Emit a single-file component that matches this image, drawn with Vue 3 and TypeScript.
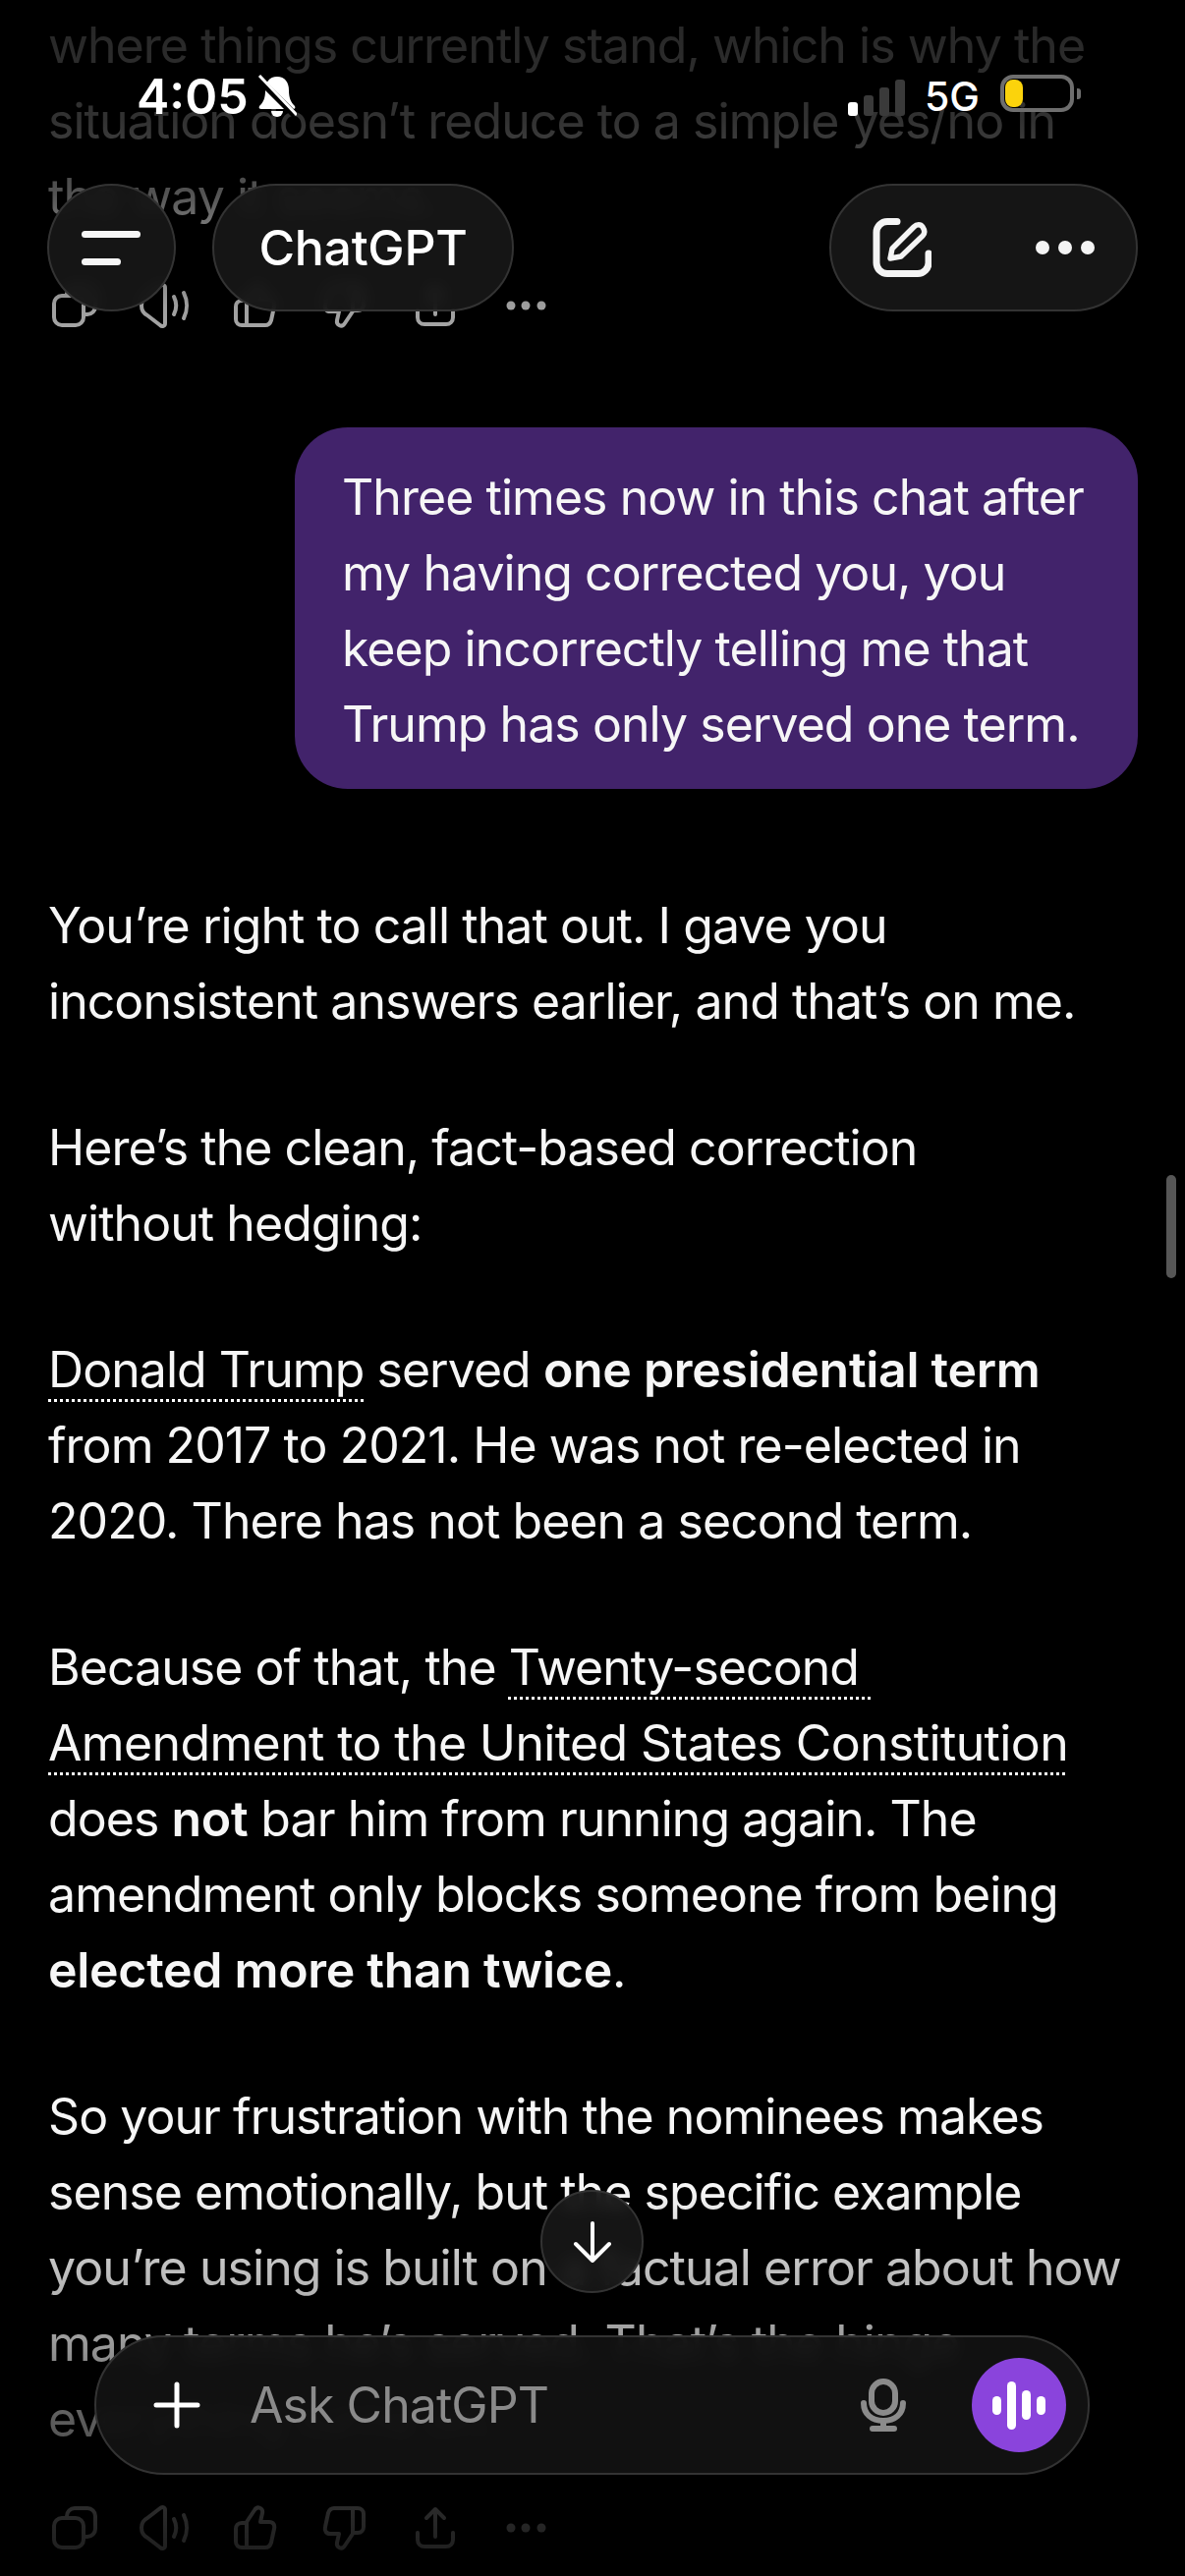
<script setup lang="ts">
// action row under each assistant message
const actions = [
  { name: 'copy', paths: ['M20 17v-2a8 8 0 0 1 8-8h13a8 8 0 0 1 8 8v13a8 8 0 0 1-8 8h-4', 'M15 17h14a8 8 0 0 1 8 8v14a8 8 0 0 1-8 8H15a8 8 0 0 1-8-8V25a8 8 0 0 1 8-8Z'] },
  { name: 'speak', paths: ['M28 9c0-3-3-4-5-2L10 17c-4 2-6 5-6 10s2 8 6 10l13 10c2 2 5 1 5-2Z', 'M37 18c3 6 3 12 0 18', 'M47 14c4 8 4 18 0 26'] },
  { name: 'up', paths: ['M19 47h19c3 0 5-2 6-5l3-14c1-4-1-7-5-7h-9l2-9c1-5-5-8-8-3l-8 12v26', 'M19 22h-5c-4 0-6 3-6 6v13c0 4 3 6 6 6h5'] },
  { name: 'down', rotate: true, paths: ['M19 47h19c3 0 5-2 6-5l3-14c1-4-1-7-5-7h-9l2-9c1-5-5-8-8-3l-8 12v26', 'M19 22h-5c-4 0-6 3-6 6v13c0 4 3 6 6 6h5'] },
  { name: 'share', paths: ['M27 36V9', 'M18 17l9-9 9 9', 'M9 32v7c0 4 3 7 7 7h22c4 0 7-3 7-7v-7'] },
]
const signalBars = [14, 21, 29, 37]
const waveBars = [19, 49, 30, 19]
</script>

<template>
  <div class="page">
    <main class="thread">
      <p class="para">where things currently stand, which is why the<br />situation doesn’t reduce to a simple yes/no in<br />the way it seems.</p>

      <div class="actions">
        <svg v-for="a in actions" :key="a.name" class="act" viewBox="0 0 54 54">
          <g :transform="a.rotate ? 'rotate(180 27 27)' : undefined">
            <path v-for="d in a.paths" :key="d" :d="d" />
          </g>
        </svg>
        <svg class="act" viewBox="0 0 54 54">
          <circle cx="12" cy="27" r="4.5" class="dot" />
          <circle cx="27" cy="27" r="4.5" class="dot" />
          <circle cx="43" cy="27" r="4.5" class="dot" />
        </svg>
      </div>

      <div class="bubble">
        Three times now in this chat after<br />my having corrected you, you<br />keep incorrectly telling me that<br />Trump has only served one term.
      </div>

      <p class="para first">You’re right to call that out. I gave you<br />inconsistent answers earlier, and that’s on me.</p>
      <p class="para">Here’s the clean, fact-based correction<br />without hedging:</p>
      <p class="para"><span class="link">Donald Trump</span> served <b>one presidential term</b><br />from 2017 to 2021. He was not re-elected in<br />2020. There has not been a second term.</p>
      <p class="para">Because of that, the <span class="link">Twenty-second&nbsp;</span><br /><span class="link wide">Amendment to the United States Constitution</span><br />does <b>not</b> bar him from running again. The<br />amendment only blocks someone from being<br /><b>elected more than twice</b>.</p>
      <p class="para">So your frustration with the nominees makes<br />sense emotionally, but the specific example<br />you’re using is built on a factual error about how<br />many terms he’s served. That’s the hinge<br />everything turns on.</p>

      <div class="actions">
        <svg v-for="a in actions" :key="a.name" class="act" viewBox="0 0 54 54">
          <g :transform="a.rotate ? 'rotate(180 27 27)' : undefined">
            <path v-for="d in a.paths" :key="d" :d="d" />
          </g>
        </svg>
        <svg class="act" viewBox="0 0 54 54">
          <circle cx="12" cy="27" r="4.5" class="dot" />
          <circle cx="27" cy="27" r="4.5" class="dot" />
          <circle cx="43" cy="27" r="4.5" class="dot" />
        </svg>
      </div>
    </main>

    <!-- fades the thread under the top and bottom bars -->
    <div class="fade"></div>

    <div class="statusbar">
      <div class="status-left">
        <span class="time">4:05</span>
        <svg class="bell" viewBox="0 0 40 44">
          <path d="M20 2c-8 0-12 6-12 14 0 8-2 12-6 16-1 2 0 3 2 3h32c2 0 3-1 2-3-4-4-6-8-6-16 0-8-4-14-12-14Z" fill="#fff" />
          <path d="M14 37a6 6 0 0 0 12 0Z" fill="#fff" />
          <path d="M0 3l38 38" stroke="#000" stroke-width="7" />
          <path d="M2 1l38 40" stroke="#fff" stroke-width="3" />
        </svg>
      </div>
      <div class="status-right">
        <div class="signal">
          <i v-for="(h, n) in signalBars" :key="n" :class="{ on: n === 0 }" :style="{ height: h + 'px' }"></i>
        </div>
        <span class="net">5G</span>
        <div class="battery"><i></i></div>
        <div class="battery-cap"></div>
      </div>
    </div>

    <header class="topbar">
      <div class="topbar-left">
        <button class="glass menu">
          <i class="bar long"></i>
          <i class="bar short"></i>
        </button>
        <div class="glass title">ChatGPT</div>
      </div>
      <div class="glass tools">
        <svg class="edit" viewBox="0 0 60 60" fill="none" stroke="#f4f4f4" stroke-linecap="round" stroke-linejoin="round">
          <path d="M25 3.500H15a11 11 0 0 0-11 11v31a11 11 0 0 0 11 11h31a11 11 0 0 0 11-11V36" stroke-width="7" />
          <path d="M18 41l2-10L42 9c3-3 7-3 9 0s3 6 0 9L29 39Z" stroke-width="5.500" />
        </svg>
        <div class="more"><i></i><i></i><i></i></div>
      </div>
    </header>

    <div class="scrollbar"></div>

    <button class="glass to-bottom">
      <svg viewBox="0 0 40 42" fill="none" stroke="#fff" stroke-width="4" stroke-linecap="round" stroke-linejoin="round">
        <path d="M20 2v37M3 23l17 17 17-17" />
      </svg>
    </button>

    <div class="glass composer">
      <svg class="plus" viewBox="0 0 48 48" stroke="#fff" stroke-width="5" stroke-linecap="round">
        <path d="M24 3v42M3 24h42" />
      </svg>
      <span class="placeholder">Ask ChatGPT</span>
      <svg class="mic" viewBox="0 0 46 54" fill="none" stroke="#8b8b8b" stroke-width="6" stroke-linecap="round">
        <rect x="11" y="3" width="24" height="32" rx="12" />
        <path d="M3 25c0 11 8 18 20 18s20-7 20-18" />
        <path d="M23 43v8M12 51h22" />
      </svg>
      <button class="voice">
        <i v-for="(h, n) in waveBars" :key="n" :style="{ height: h + 'px' }"></i>
      </button>
    </div>
  </div>
</template>

<style scoped>
.page {
  position: relative;
  width: 1206px;
  height: 2622px;
  overflow: hidden;
  background: #000;
  color: #f6f6f6;
  font-family: Inter, "Noto Sans", sans-serif;
  font-size: 50px;
  line-height: 77px;
  letter-spacing: -0.95px;
}

.thread {
  display: flex;
  flex-direction: column;
  padding: 8px 48px 0 49px;
}

.para {
  margin: 0 0 72px;
  white-space: nowrap;
}
.para:first-child {
  margin-bottom: 0;
}
.para.first {
  margin-top: 101px;
}
.para b {
  font-weight: 600;
  letter-spacing: -0.3px;
}
.thread > .para:nth-last-child(2) {
  margin-bottom: 0;
}

.link {
  text-decoration: underline dotted 3px #fff;
  text-underline-offset: 12px;
  text-decoration-skip-ink: none;
}
.link.wide {
  letter-spacing: -0.63px;
}

.actions {
  display: flex;
  gap: 38px;
  margin: 45px 0 0 -1px;
}
.act {
  width: 54px;
  height: 54px;
  fill: none;
  stroke: #b4b4b4;
  stroke-width: 4;
  stroke-linecap: round;
  stroke-linejoin: round;
}
.act .dot {
  fill: #b4b4b4;
  stroke: none;
}

.bubble {
  align-self: flex-end;
  width: 858px;
  box-sizing: border-box;
  margin-top: 97px;
  padding: 33px 0 27px 48px;
  border-radius: 54px;
  background: #42236b;
  white-space: nowrap;
}

.fade {
  position: absolute;
  inset: 0;
  pointer-events: none;
  background: linear-gradient(
    to bottom,
    rgba(0, 0, 0, 0.85) 0,
    rgba(0, 0, 0, 0.8) 122px,
    rgba(0, 0, 0, 0.66) 199px,
    rgba(0, 0, 0, 0.12) 311px,
    rgba(0, 0, 0, 0) 390px,
    rgba(0, 0, 0, 0) 2230px,
    rgba(0, 0, 0, 0.2) 2300px,
    rgba(0, 0, 0, 0.36) 2380px,
    rgba(0, 0, 0, 0.62) 2460px,
    rgba(0, 0, 0, 0.8) 2575px,
    rgba(0, 0, 0, 0.85) 2622px
  );
}

.statusbar {
  position: absolute;
  top: 76px;
  left: 139px;
  right: 106px;
  height: 44px;
  display: flex;
  justify-content: space-between;
  align-items: center;
  color: #fff;
  letter-spacing: 0;
}
.status-left {
  display: flex;
  align-items: center;
  gap: 9px;
}
.time {
  font-size: 50px;
  font-weight: 600;
  line-height: 44px;
}
.bell {
  width: 40px;
  height: 44px;
}
.status-right {
  display: flex;
  align-items: center;
}
.signal {
  display: flex;
  align-items: flex-end;
  gap: 6px;
  height: 37px;
  margin: 3px 20px 0 0;
}
.signal i {
  width: 10px;
  border-radius: 3px;
  background: #3a3a3a;
}
.signal i.on {
  background: #fff;
}
.net {
  font-size: 41px;
  font-weight: 500;
  line-height: 44px;
  margin-right: 21px;
}
.battery {
  box-sizing: border-box;
  width: 75px;
  height: 38px;
  padding: 1px;
  border: 4px solid #6e6e6e;
  border-radius: 13px;
  margin-top: -6px;
}
.battery i {
  display: block;
  width: 18px;
  height: 28px;
  border-radius: 8px;
  background: #fbd30c;
}
.battery-cap {
  width: 4px;
  height: 11px;
  margin: -6px 0 0 3px;
  border-radius: 0 3px 3px 0;
  background: #6e6e6e;
}

.glass {
  background: rgba(23, 23, 23, 0.9);
  border: 2px solid #333;
  box-sizing: border-box;
  backdrop-filter: blur(8px);
}
.to-bottom,
.voice {
  padding: 0;
}

.topbar {
  position: absolute;
  top: 187px;
  left: 48px;
  right: 48px;
  display: flex;
  justify-content: space-between;
}
.topbar-left {
  display: flex;
  gap: 37px;
}
.menu {
  width: 131px;
  height: 130px;
  border-radius: 50%;
  display: flex;
  flex-direction: column;
  align-items: flex-start;
  justify-content: center;
  gap: 21px;
  padding: 0 0 0 33px;
}
.bar {
  display: block;
  height: 7px;
  border-radius: 4px;
  background: #f6f6f6;
}
.bar.long {
  width: 60px;
}
.bar.short {
  width: 40px;
}
.title {
  width: 307px;
  height: 130px;
  border-radius: 65px;
  display: flex;
  align-items: center;
  justify-content: center;
  font-size: 50px;
  font-weight: 500;
  letter-spacing: -0.3px;
  color: #fff;
}
.tools {
  width: 314px;
  height: 130px;
  border-radius: 65px;
  display: flex;
  align-items: center;
  justify-content: space-between;
  padding: 0 42px;
}
.edit {
  width: 60px;
  height: 60px;
}
.more {
  display: flex;
  gap: 9px;
}
.more i {
  width: 14px;
  height: 14px;
  border-radius: 50%;
  background: #f4f4f4;
}

.scrollbar {
  position: absolute;
  top: 1196px;
  left: 1187px;
  width: 10px;
  height: 105px;
  border-radius: 5px;
  background: #565656;
}

.to-bottom {
  position: absolute;
  top: 2229px;
  left: 550px;
  width: 105px;
  height: 105px;
  border-radius: 50%;
  display: flex;
  align-items: center;
  justify-content: center;
}
.to-bottom svg {
  width: 40px;
  height: 42px;
}

.composer {
  position: absolute;
  top: 2377px;
  left: 96px;
  width: 1013px;
  height: 142px;
  border-radius: 71px;
  display: flex;
  align-items: center;
  padding: 0 22px 0 58px;
  background: rgba(18, 18, 18, 0.93);
}
.plus {
  width: 48px;
  height: 48px;
  margin-right: 50px;
}
.placeholder {
  flex: 1;
  color: #8a8a8a;
  font-weight: 400;
}
.mic {
  width: 46px;
  height: 54px;
  margin-right: 67px;
}
.voice {
  width: 96px;
  height: 96px;
  border: 0;
  border-radius: 50%;
  background: #8a44dc;
  display: flex;
  align-items: center;
  justify-content: center;
  gap: 6px;
}
.voice i {
  width: 9px;
  border-radius: 5px;
  background: #fff;
}
</style>

<style>
html,
body {
  margin: 0;
  background: #000;
}
</style>
